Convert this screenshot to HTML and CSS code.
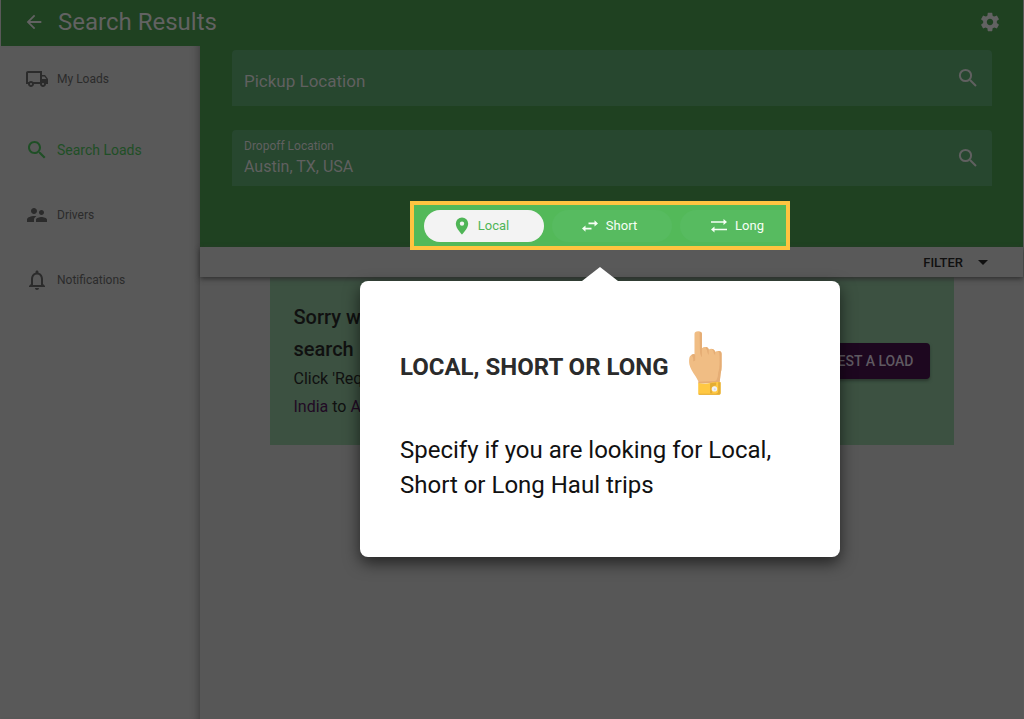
FILE: index.html
```html
<!DOCTYPE html>
<html lang="en">
<head>
<meta charset="utf-8">
<meta name="viewport" content="width=device-width, initial-scale=1">
<title>Search Results</title>
<link rel="stylesheet" href="styles.css">
</head>
<body>
<div class="app">
  <header class="topbar">
    <button class="icon-btn" type="button" aria-label="Back">
      <svg class="icon" viewBox="0 0 24 24"><path d="M20 11H7.830l5.590-5.590L12 4l-8 8 8 8 1.410-1.410L7.830 13H20v-2z"/></svg>
    </button>
    <h1 class="topbar-title">Search Results</h1>
    <button class="icon-btn" type="button" aria-label="Settings">
      <svg class="icon" viewBox="0 0 24 24"><path d="M19.430 12.980c.04-.32.07-.64.07-.98s-.03-.66-.07-.98l2.110-1.650c.19-.15.24-.42.12-.64l-2-3.460c-.12-.22-.39-.3-.61-.22l-2.490 1c-.52-.4-1.080-.73-1.690-.98l-.38-2.650C14.460 2.180 14.250 2 14 2h-4c-.25 0-.46.18-.49.42l-.38 2.650c-.61.25-1.170.59-1.690.98l-2.490-1c-.23-.09-.49 0-.61.22l-2 3.460c-.13.22-.07.49.12.64l2.110 1.650c-.04.32-.07.65-.07.98s.03.66.07.98l-2.110 1.650c-.19.15-.24.42-.12.64l2 3.460c.12.22.39.3.61.22l2.490-1c.52.4 1.080.73 1.690.98l.38 2.650c.03.24.24.42.49.42h4c.25 0 .46-.18.49-.42l.38-2.650c.61-.25 1.170-.59 1.690-.98l2.490 1c.23.09.49 0 .61-.22l2-3.460c.12-.22.07-.49-.12-.64l-2.110-1.650zM12 15.500c-1.930 0-3.500-1.570-3.500-3.500s1.570-3.500 3.500-3.500 3.500 1.570 3.500 3.500-1.570 3.500-3.500 3.500z"/></svg>
    </button>
  </header>

  <div class="body">
    <nav class="sidebar">
      <a class="nav-item nav-first" href="#">
        <svg class="icon" viewBox="0 0 24 24"><path d="M20 8h-3V4H3c-1.100 0-2 .9-2 2v11h2c0 1.660 1.340 3 3 3s3-1.340 3-3h6c0 1.660 1.340 3 3 3s3-1.340 3-3h2v-5l-3-4zm-.5 1.500l1.960 2.500H17V9.500h2.500zM6 18c-.55 0-1-.45-1-1s.45-1 1-1 1 .45 1 1-.45 1-1 1zm2.220-3c-.55-.61-1.330-1-2.220-1s-1.670.39-2.220 1H3V6h12v9H8.220zM18 18c-.55 0-1-.45-1-1s.45-1 1-1 1 .45 1 1-.45 1-1 1z"/></svg>
        <span>My Loads</span>
      </a>
      <a class="nav-item nav-active" href="#">
        <svg class="icon" viewBox="0 0 24 24"><path d="M15.500 14h-.79l-.28-.27C15.410 12.590 16 11.110 16 9.500 16 5.910 13.090 3 9.500 3S3 5.910 3 9.500 5.910 16 9.500 16c1.610 0 3.090-.59 4.230-1.570l.27.28v.79l5 4.990L20.490 19l-4.990-5zm-6 0C7.010 14 5 11.990 5 9.500S7.010 5 9.500 5 14 7.010 14 9.500 11.990 14 9.500 14z"/></svg>
        <span>Search Loads</span>
      </a>
      <a class="nav-item" href="#">
        <svg class="icon" viewBox="0 0 24 24"><path d="M16.500 12c1.380 0 2.490-1.120 2.490-2.500S17.880 7 16.500 7 14 8.120 14 9.500s1.120 2.500 2.500 2.500zM9 11c1.660 0 2.990-1.340 2.990-3S10.660 5 9 5 6 6.340 6 8s1.340 3 3 3zm7.500 3c-1.830 0-5.500.92-5.500 2.750V19h11v-2.250c0-1.830-3.670-2.750-5.500-2.750zM9 13c-2.330 0-7 1.170-7 3.500V19h7v-2.250c0-.85.33-2.340 2.370-3.470C10.500 13.100 9.660 13 9 13z"/></svg>
        <span>Drivers</span>
      </a>
      <a class="nav-item" href="#">
        <svg class="icon" viewBox="0 0 24 24"><path d="M12 22c1.100 0 2-.9 2-2h-4c0 1.100.9 2 2 2zm6-6v-5c0-3.070-1.630-5.640-4.500-6.320V4c0-.83-.67-1.500-1.500-1.500s-1.500.67-1.500 1.500v.68C7.640 5.360 6 7.920 6 11v5l-2 2v1h16v-1l-2-2zm-2 1H8v-6c0-2.480 1.510-4.500 4-4.500s4 2.020 4 4.500v6z"/></svg>
        <span>Notifications</span>
      </a>
    </nav>

    <main class="main">
      <section class="search">
        <div class="field">
          <div class="field-text field-empty">
            <input class="field-input" id="pickup" type="text" placeholder="Pickup Location" aria-label="Pickup Location">
          </div>
          <svg class="icon icon-search" viewBox="0 0 24 24"><circle cx="9.500" cy="9.500" r="5.600"/><path d="M14 14l6 6"/></svg>
        </div>
        <div class="field">
          <div class="field-text">
            <label class="field-label" for="dropoff">Dropoff Location</label>
            <input class="field-input" id="dropoff" type="text" value="Austin, TX, USA">
          </div>
          <svg class="icon icon-search" viewBox="0 0 24 24"><circle cx="9.500" cy="9.500" r="5.600"/><path d="M14 14l6 6"/></svg>
        </div>

        <div class="tour">
          <div class="spotlight">
            <button class="trip trip-on" type="button">
              <svg class="trip-icon" viewBox="0 0 20 20"><path d="M10 1.500A6.200 6.200 0 0 0 3.800 7.700C3.800 12.300 10 18.500 10 18.500s6.200-6.200 6.200-10.800A6.200 6.200 0 0 0 10 1.500zm0 8.300a2.200 2.200 0 1 1 0-4.400 2.200 2.200 0 0 1 0 4.400z"/></svg>
              Local
            </button>
            <button class="trip" type="button">
              <svg class="trip-icon" viewBox="0 0 20 20"><path d="M8.500 6.600h6V4.300L18 7.400l-3.500 3.100V8.200h-6zM11.500 11.800h-6V9.500L2 12.600l3.500 3.100v-2.300h6z"/></svg>
              Short
            </button>
            <button class="trip" type="button">
              <svg class="trip-icon" viewBox="0 0 20 20"><path d="M2 5.200h12.500V3L18 6l-3.500 3V6.800H2zM18 12.700H5.500v-2.200L2 13.500l3.500 3v-2.200H18z"/></svg>
              Long
            </button>
          </div>

          <div class="popover" role="dialog" aria-labelledby="tour-title">
            <svg class="popover-arrow" viewBox="0 0 36 14"><path d="M0 14L18 0l18 14z"/></svg>
            <div class="popover-head">
              <h2 class="popover-title" id="tour-title">LOCAL, SHORT OR LONG</h2>
              <svg class="hand" viewBox="120 63 97 189">
                <path fill="#f0bd84" d="M136 72q0-8 11-8t11 8v42q6-6 13-3 6 2 7 7 7-4 13-1 5 2 6 7 6-3 12-2 7 1 7 8v38q0 12-3 22-1 12-3 26l-60 2q-4-10-10-20-16-22-19-36-2-10 0-21 2-7 15-9z"/>
                <path fill="#e5ad75" d="M151 65q7 0 7 8v66h-2q-5-10-4-22z"/>
                <path fill="#e5ad75" d="M126 134q9-6 12 0v16q-3 3-6 2 2-12-6-18zM168 111q7-2 10 5v18q-5-7-5-14zM187 116q7-1 10 8v11q-6-6-5-12zM206 122q10-1 10 8v38q0 12-3 22-1 12-3 26l-62 2-1-5 50-2q8-4 9-25 4-10 4-26v-22q0-12-4-16z"/>
                <path fill="#ffc843" d="M147 216q12 5 28 2 20-5 38-4v33q0 4-4 4h-58q-4 0-4-4z"/>
                <path fill="#e3ac34" d="M206 214h7v33q0 4-4 4h-58q-4 0-4-3h52q7 0 7-7zM182 217l18-2v9q-14 0-14 12l3 11h-7z"/>
                <circle cx="195" cy="234" r="8" fill="#f2f2f6"/>
                <circle cx="196" cy="235" r="3" fill="#d5d9e2"/>
              </svg>
            </div>
            <p class="popover-text">Specify if you are looking for Local, Short or Long Haul trips</p>
          </div>
        </div>
      </section>

      <div class="filterbar">
        <button class="filter" type="button">FILTER
          <svg class="icon" viewBox="0 0 24 24"><path d="M7 10l5 5 5-5z"/></svg>
        </button>
      </div>

      <section class="empty">
        <div class="empty-text">
          <h3 class="empty-title">Sorry we can't<br>search</h3>
          <p class="empty-note">Click 'Request'<br><span class="place">India</span> to <span class="place">Austin</span></p>
        </div>
        <button class="request" type="button">REQUEST A LOAD</button>
      </section>
    </main>
  </div>
</div>
</body>
</html>
```
FILE: styles.css
```css
* { box-sizing: border-box; }

body {
  margin: 0;
  background: #575757;
  font-family: Roboto, "Liberation Sans", sans-serif;
  color: #101010;
}

h1, h2, h3, p { margin: 0; }

button, input { font: inherit; }

button {
  border: 0;
  padding: 0;
  background: none;
  color: inherit;
}

.app {
  min-height: 100vh;
  display: flex;
  flex-direction: column;
  border: solid #595959;
  border-width: 0 1px;
}

.icon {
  display: block;
  flex: none;
  width: 24px;
  height: 24px;
  fill: currentColor;
}

.topbar {
  display: flex;
  align-items: center;
  gap: 13px;
  height: 46px;
  padding: 0 22px 2px;
  background: #1f4121;
  color: #626262;
}

.icon-btn .icon { width: 22px; height: 22px; }

.topbar-title {
  flex: 1;
  font-size: 24px;
  font-weight: 400;
  line-height: 32px;
}

.body {
  flex: 1;
  display: flex;
}

.sidebar {
  flex: none;
  width: 199px;
  background: #595959;
  box-shadow: inset -9px 0 8px -8px #3c3c3c;
}

.nav-item {
  display: flex;
  align-items: center;
  gap: 8px;
  height: 65px;
  padding-left: 24px;
  color: #2b2b2b;
  font-size: 12px;
  text-decoration: none;
}

.nav-first { margin-bottom: 6px; }

.nav-active {
  color: #1f4f26;
  font-size: 14px;
}

.main {
  flex: 1;
  min-width: 0;
}

.search {
  display: flex;
  flex-direction: column;
  gap: 24px;
  padding: 4px 31px 0 32px;
  background: #1f4121;
  color: #606060;
}

.field {
  display: flex;
  align-items: center;
  height: 56px;
  padding: 0 12px;
  border-radius: 4px 4px 0 0;
  background: #27472f;
}

.field-text {
  flex: 1;
  display: flex;
  flex-direction: column;
}

.field-empty { padding-top: 6px; }

.field-label {
  font-size: 12px;
  line-height: 16px;
}

.field-input {
  width: 100%;
  height: 24px;
  padding: 0;
  border: 0;
  outline: 0;
  background: none;
  color: #606060;
  font-size: 16px;
}

.field-empty .field-input { font-size: 17px; }

.field-input::placeholder {
  color: #606060;
  opacity: 1;
}

.icon-search {
  fill: none;
  stroke: currentColor;
  stroke-width: 2;
}

.tour {
  position: relative;
  z-index: 2;
  align-self: center;
  width: 380px;
  margin: -9px 24px -3px 0;
}

.spotlight {
  display: flex;
  align-items: center;
  gap: 8px;
  height: 49px;
  padding-left: 10px;
  overflow: hidden;
  border: 4px solid #ffc440;
  background: #53b959;
}

.trip {
  flex: none;
  display: flex;
  align-items: center;
  justify-content: center;
  gap: 6px;
  width: 120px;
  height: 32px;
  padding-right: 7px;
  border-radius: 16px;
  background: #57bb60;
  color: #f6fff6;
  font-size: 13px;
}

.trip-on {
  background: #f3f3f3;
  color: #4fb556;
}

.trip-icon {
  width: 20px;
  height: 20px;
  fill: currentColor;
}

.popover {
  position: absolute;
  top: calc(100% + 31px);
  left: 50%;
  width: 480px;
  padding: 50px 40px 54px;
  transform: translateX(-50%);
  border-radius: 8px;
  background: #fff;
  box-shadow: 0 6px 16px rgba(0, 0, 0, .6);
  color: #111;
}

.popover-arrow {
  position: absolute;
  bottom: 100%;
  left: 50%;
  width: 36px;
  height: 14px;
  transform: translateX(-50%);
  fill: #fff;
}

.popover-head {
  display: flex;
  align-items: center;
  gap: 20px;
}

.popover-title {
  padding-top: 8px;
  color: #2b2b2b;
  font-size: 24px;
  font-weight: 700;
  line-height: 32px;
}

.hand {
  width: 33px;
  height: 64px;
}

.popover-text {
  margin-top: 38px;
  font-size: 24px;
  line-height: 35px;
}

.filterbar {
  position: relative;
  display: flex;
  justify-content: flex-end;
  height: 30px;
  padding-right: 28px;
  background: #595959;
  box-shadow: 0 2px 5px #303030;
}

.filter {
  display: flex;
  align-items: center;
  gap: 8px;
  font-size: 13px;
  font-weight: 500;
}

.empty {
  display: flex;
  align-items: center;
  justify-content: space-between;
  max-width: 684px;
  min-height: 168px;
  margin: 0 auto;
  padding: 24px;
  background: #3c5141;
}

.empty-title {
  font-size: 20px;
  font-weight: 500;
  line-height: 32px;
}

.empty-note {
  font-size: 16px;
  line-height: 28px;
}

.place { color: #210a24; }

.request {
  height: 36px;
  padding: 0 16px;
  border-radius: 4px;
  background: #1d071f;
  box-shadow: 0 2px 3px #2a392e;
  color: #5f5961;
  font-size: 14px;
  font-weight: 500;
}
```
